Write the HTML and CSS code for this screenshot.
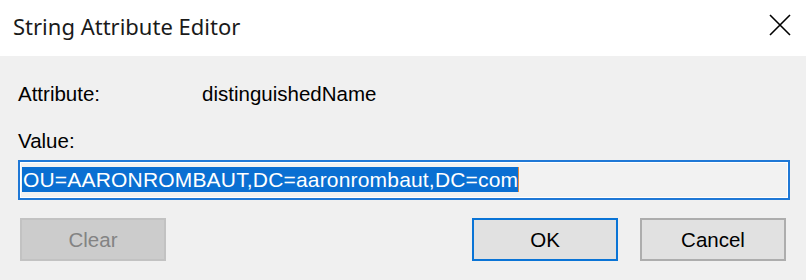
FILE: index.html
```html
<!DOCTYPE html>
<html>
<head>
<meta charset="utf-8">
<link rel="stylesheet" href="styles.css">
</head>
<body>
<div class="dialog">
  <div class="titlebar">
    <span class="title">String Attribute Editor</span>
    <svg class="close" width="22" height="22" viewBox="0 0 22 22"><path d="M1 1 L21 21 M21 1 L1 21" stroke="#000" stroke-width="1.6" fill="none"/></svg>
  </div>
  <div class="content">
    <div class="row attr-row">
      <span class="label">Attribute:</span>
      <span class="attr-value">distinguishedName</span>
    </div>
    <div class="row value-row"><span class="label">Value:</span></div>
    <div class="textbox"><span class="selected">OU=AARONROMBAUT,DC=aaronrombaut,DC=com</span><span class="caret"></span></div>
    <div class="buttons">
      <button class="btn btn-disabled">Clear</button>
      <div class="spacer"></div>
      <button class="btn btn-default">OK</button>
      <button class="btn">Cancel</button>
    </div>
  </div>
</div>
</body>
</html>
```
FILE: styles.css
```css
html, body {
  margin: 0;
  padding: 0;
}
body {
  width: 806px;
  height: 280px;
  background: #f0f0f0;
  overflow: hidden;
  font-family: "Liberation Sans", Arial, sans-serif;
}
.dialog {
  width: 806px;
  height: 280px;
  display: flex;
  flex-direction: column;
}
.titlebar {
  height: 56px;
  background: #ffffff;
  display: flex;
  align-items: center;
  justify-content: space-between;
  padding: 0 15px 0 13px;
  box-sizing: border-box;
}
.title {
  font-family: "Noto Sans", "Open Sans", sans-serif;
  font-size: 22px;
  color: #1a1a1a;
  margin-top: -4px;
}
.close {
  display: block;
  margin-top: -6px;
}
.content {
  padding: 0 16px 0 18px;
}
.row {
  font-size: 20.5px;
  line-height: 24px;
  color: #000;
  display: flex;
}
.attr-row {
  margin-top: 26px;
}
.attr-value {
  margin-left: 102px;
}
.value-row {
  margin-top: 23px;
}
.textbox {
  margin-top: 7px;
  height: 40px;
  box-sizing: border-box;
  border: 2px solid #1f78d6;
  box-shadow: inset 0 0 0 1px #ffffff;
  background: #f2f2f2;
  padding: 5px 1px 0 2px;
  display: flex;
}
.selected {
  display: inline-block;
  background: #0a6fd2;
  color: #ffffff;
  font-size: 21px;
  letter-spacing: 0.18px;
  line-height: 25px;
  height: 25px;
  white-space: nowrap;
  padding-left: 1px;
}
.caret {
  display: inline-block;
  width: 1px;
  height: 25px;
  background: #e58a3c;
}
.buttons {
  margin-top: 18px;
  margin-right: 4px;
  display: flex;
  gap: 22px;
  padding-left: 2px;
}
.spacer {
  flex: 1;
}
.btn {
  width: 146px;
  height: 43px;
  box-sizing: border-box;
  background: #e1e1e1;
  border: 2px solid #adadad;
  font-family: "Liberation Sans", Arial, sans-serif;
  font-size: 20.5px;
  color: #000;
  padding: 0;
  margin: 0;
}
.btn-default {
  border-color: #0a74d6;
}
.btn-disabled {
  background: #cccccc;
  border: 2px solid #c2c2c2;
  color: #838383;
}
```
